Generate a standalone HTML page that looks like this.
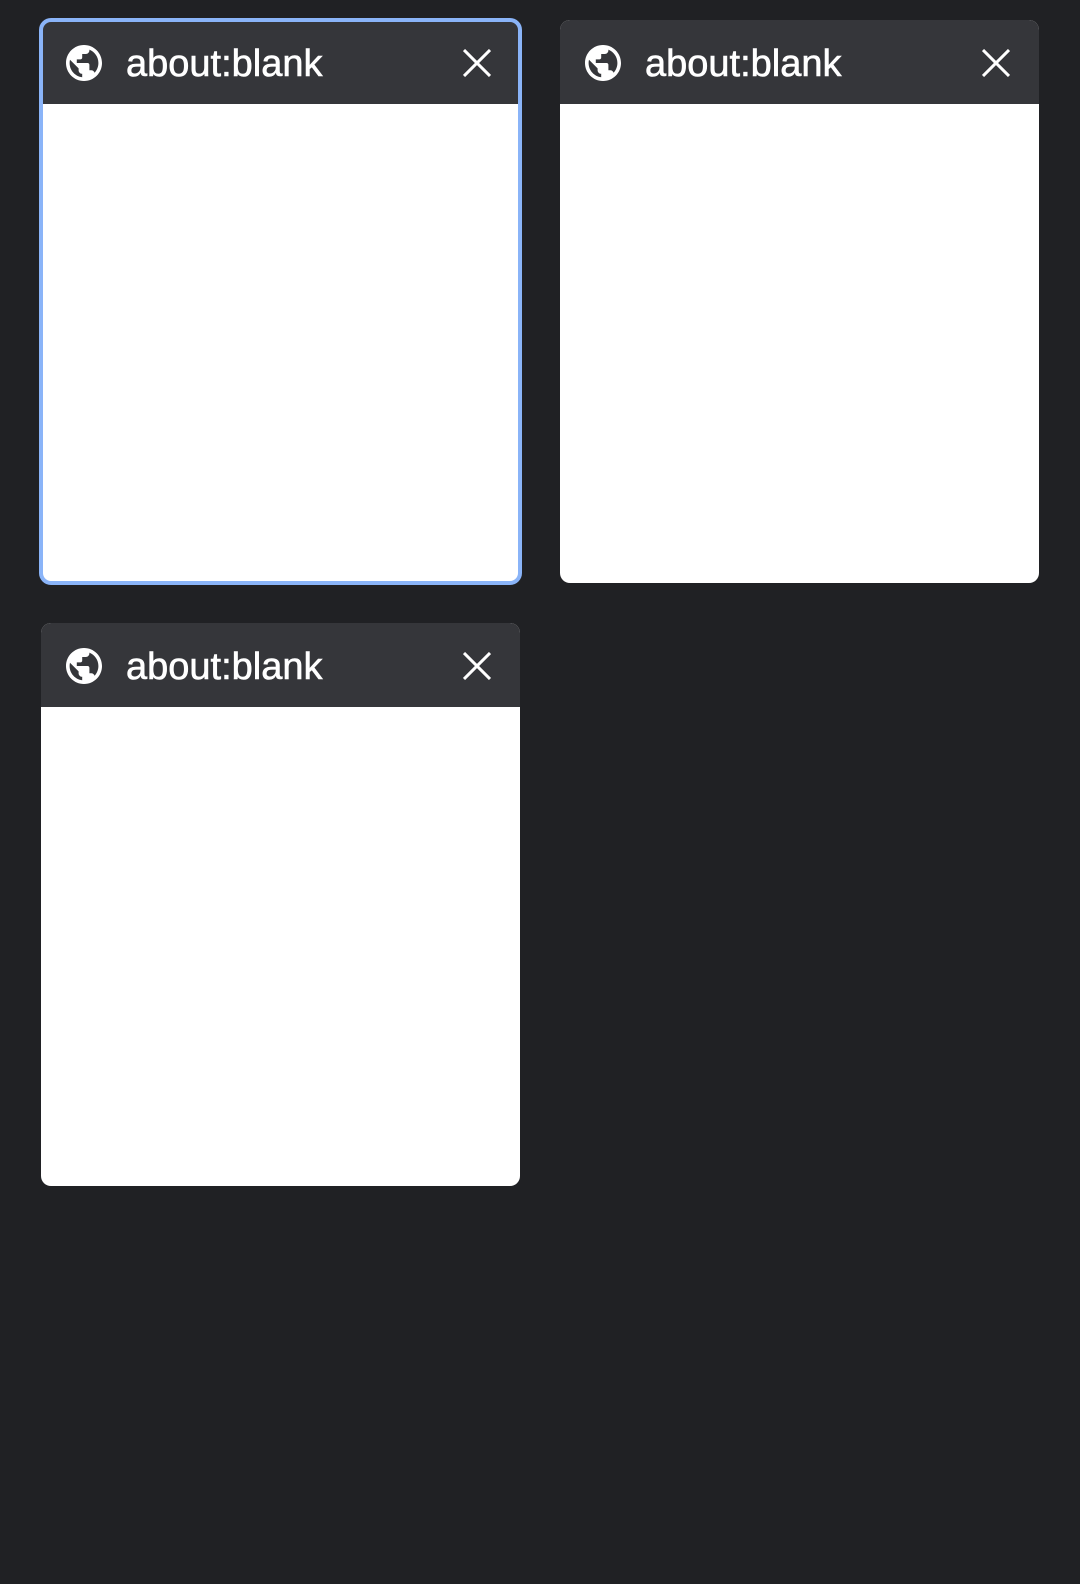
<!DOCTYPE html>
<html><head><style>
html,body{margin:0;padding:0;background:#202124;width:1080px;height:1584px;overflow:hidden;font-family:"Liberation Sans",Roboto,sans-serif;}
.card{position:absolute;width:479px;height:563px;background:#fff;border-radius:10px;overflow:hidden;}
.hd{height:84px;background:#35363a;position:relative;color:#fff;}
.hd .t{position:absolute;left:85px;top:22px;font-size:38px;line-height:44px;-webkit-text-stroke:0.6px #fff;}
.hd svg.g{position:absolute;left:25px;top:25px;}
.hd svg.x{position:absolute;left:422px;top:29px;}
.sel{position:absolute;left:39px;top:18px;width:475px;height:559px;border:4px solid #8ab4f8;border-radius:12px;}
</style></head><body>
<div class="card" style="left:41px;top:20px"><div class="hd"><svg class="g" width="36" height="36" viewBox="2 2 20 20"><path fill="#fff" d="M12 2C6.48 2 2 6.48 2 12s4.48 10 10 10 10-4.48 10-10S17.52 2 12 2zm-1 17.93c-3.95-.49-7-3.85-7-7.93 0-.62.08-1.21.21-1.79L9 15v1c0 1.1.9 2 2 2v1.93zm6.9-2.540c-.26-.81-1-1.39-1.9-1.39h-1v-3c0-.55-.45-1-1-1H8v-2h2c.55 0 1-.45 1-1V7h2c1.1 0 2-.9 2-2v-.41c2.93 1.19 5 4.06 5 7.41 0 2.08-.8 3.97-2.1 5.39z"/></svg><span class="t">about:blank</span><svg class="x" width="28" height="28" viewBox="0 0 28 28"><path d="M1 1L27 27M27 1L1 27" stroke="#fff" stroke-width="3"/></svg></div></div>
<div class="sel"></div>
<div class="card" style="left:560px;top:20px"><div class="hd"><svg class="g" width="36" height="36" viewBox="2 2 20 20"><path fill="#fff" d="M12 2C6.48 2 2 6.48 2 12s4.48 10 10 10 10-4.48 10-10S17.52 2 12 2zm-1 17.93c-3.95-.49-7-3.85-7-7.93 0-.62.08-1.21.21-1.79L9 15v1c0 1.1.9 2 2 2v1.93zm6.9-2.54c-.26-.81-1-1.39-1.9-1.39h-1v-3c0-.55-.45-1-1-1H8v-2h2c.55 0 1-.45 1-1V7h2c1.1 0 2-.9 2-2v-.41c2.93 1.19 5 4.06 5 7.41 0 2.08-.8 3.97-2.1 5.39z"/></svg><span class="t">about:blank</span><svg class="x" width="28" height="28" viewBox="0 0 28 28"><path d="M1 1L27 27M27 1L1 27" stroke="#fff" stroke-width="3"/></svg></div></div>
<div class="card" style="left:41px;top:623px"><div class="hd"><svg class="g" width="36" height="36" viewBox="2 2 20 20"><path fill="#fff" d="M12 2C6.48 2 2 6.48 2 12s4.48 10 10 10 10-4.48 10-10S17.52 2 12 2zm-1 17.93c-3.95-.49-7-3.85-7-7.93 0-.62.08-1.21.21-1.79L9 15v1c0 1.1.9 2 2 2v1.93zm6.9-2.54c-.26-.81-1-1.39-1.9-1.39h-1v-3c0-.55-.45-1-1-1H8v-2h2c.55 0 1-.45 1-1V7h2c1.1 0 2-.9 2-2v-.41c2.93 1.19 5 4.06 5 7.41 0 2.08-.8 3.97-2.1 5.39z"/></svg><span class="t">about:blank</span><svg class="x" width="28" height="28" viewBox="0 0 28 28"><path d="M1 1L27 27M27 1L1 27" stroke="#fff" stroke-width="3"/></svg></div></div>
</body></html>
